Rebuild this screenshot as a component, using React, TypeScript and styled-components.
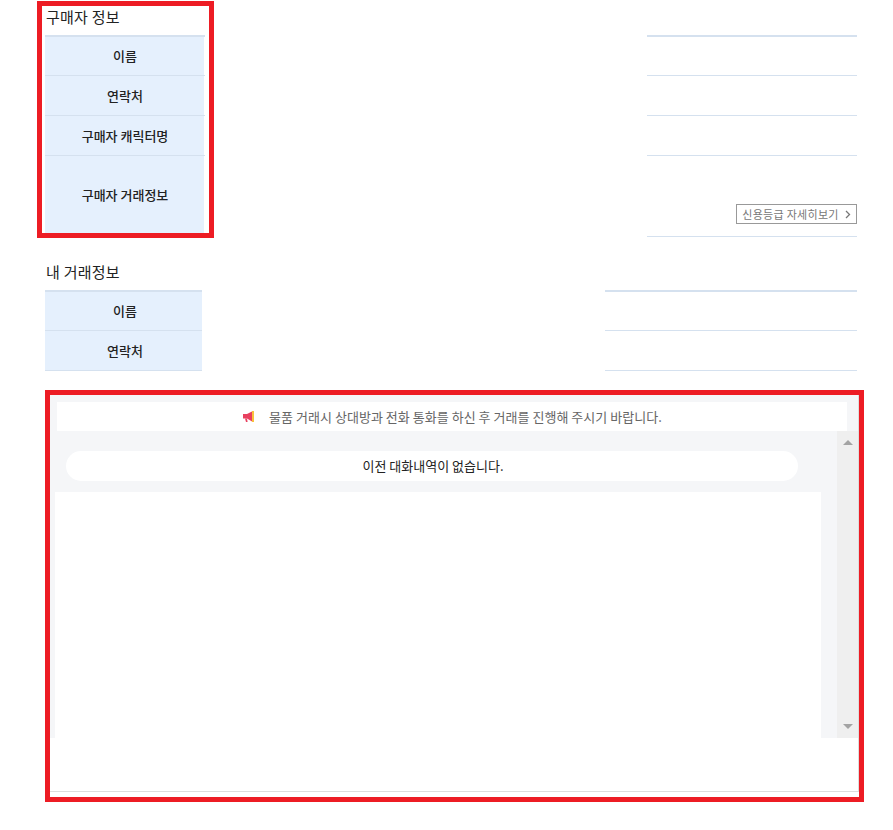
import React from 'react';
import styled, { createGlobalStyle } from 'styled-components';

const GlobalStyle = createGlobalStyle`
  html, body {
    margin: 0;
    padding: 0;
    background: #fff;
  }
  body {
    font-family: "Noto Sans CJK KR", "Noto Sans", sans-serif;
    color: #222;
  }
`;

const Page = styled.div`
  position: relative;
  width: 893px;
  height: 830px;
  padding: 8px 36px 0 45px;
  box-sizing: border-box;
  overflow: hidden;
`;

const Section = styled.section`
  margin-bottom: 24px;

  & + & {
    padding-top: 2px;
  }
`;

const Title = styled.h3`
  margin: 0;
  height: 27px;
  padding-left: 1px;
  font-size: 15px;
  line-height: 18px;
  font-weight: 400;
  letter-spacing: 0.25px;
  color: #222;
`;

interface InfoTableProps {
  $labelWidth: number;
  $valueWidth: number;
}

const InfoTable = styled.div<InfoTableProps>`
  display: grid;
  grid-template-columns: ${p => p.$labelWidth}px 1fr ${p => p.$valueWidth}px;
`;

const HeadLine = styled.div`
  position: relative;
  z-index: 1;
  height: 2px;
  margin-bottom: -1px;
  background: #d5e1ef;
`;

interface RowProps {
  $tall?: boolean;
}

interface LabelProps extends RowProps {
  $narrow?: boolean;
}

const Label = styled.div<LabelProps>`
  height: ${p => (p.$tall ? 76 : 39)}px;
  padding-bottom: ${p => (p.$tall ? 4 : 0)}px;
  padding-left: ${p => (p.$narrow ? 3 : 0)}px;
  border-bottom: 1px solid #d5e1ef;
  background: #e5f0fd;
  box-shadow: ${p => (p.$narrow ? 'none' : 'inset -1px 0 #fff')};
  display: flex;
  align-items: center;
  justify-content: center;
  font-size: 13px;
  font-weight: 500;
  color: #222;
`;

const Value = styled.div<RowProps>`
  height: ${p => (p.$tall ? 80 : 39)}px;
  border-bottom: 1px solid #d5e1ef;
  box-sizing: content-box;
  display: flex;
  align-items: flex-end;
  justify-content: flex-end;
`;

const CreditButton = styled.button`
  height: 20px;
  width: 121px;
  margin-bottom: 12px;
  padding: 0;
  border: 1px solid #999;
  background: #fff;
  display: flex;
  align-items: center;
  justify-content: center;
  gap: 6px;
  font-family: inherit;
  font-size: 11px;
  letter-spacing: 0.3px;
  color: #777;
`;

const Chat = styled.div`
  width: 808px;
  height: 396px;
  margin-left: 5px;
  display: flex;
  flex-direction: column;
  border-right: 1px solid #ddd;
  border-bottom: 1px solid #ddd;
`;

const Notice = styled.div`
  background: #f5f6f8;
  padding: 7px 11px 0 7px;
`;

const NoticeInner = styled.div`
  height: 29px;
  background: #fff;
  display: flex;
  align-items: center;
  justify-content: center;
  gap: 14px;
  font-size: 13px;
  letter-spacing: 0.03px;
  color: #666;
`;

const Board = styled.div`
  display: flex;
  height: 307px;
`;

const Messages = styled.div`
  flex: 1;
  display: flex;
  flex-direction: column;
  background: #f5f6f8;
  padding-right: 16px;
`;

const Empty = styled.div`
  padding: 20px 39px 11px 16px;
  margin-right: -16px;
`;

const Pill = styled.div`
  height: 30px;
  padding: 0 0 2px 2px;
  box-sizing: border-box;
  border-radius: 15px;
  background: #fff;
  display: flex;
  align-items: center;
  justify-content: center;
  font-size: 13px;
  color: #222;
`;

const Log = styled.div`
  flex: 1;
  background: #fff;
  margin-left: 5px;
`;

const ScrollBar = styled.div`
  width: 21px;
  background: #efefef;
  display: flex;
  flex-direction: column;
  justify-content: space-between;
  align-items: center;
  padding: 9px 0;
  box-sizing: border-box;
`;

interface ArrowProps {
  $down?: boolean;
}

const Arrow = styled.i<ArrowProps>`
  width: 0;
  height: 0;
  border-left: 5px solid transparent;
  border-right: 5px solid transparent;
  ${p =>
    p.$down
      ? 'border-top: 5px solid #a3a3a3;'
      : 'border-bottom: 5px solid #a3a3a3;'}
`;

interface HighlightProps {
  $left: number;
  $top: number;
  $width: number;
  $height: number;
}

const Highlight = styled.div<HighlightProps>`
  position: absolute;
  z-index: 2;
  left: ${p => p.$left}px;
  top: ${p => p.$top}px;
  width: ${p => p.$width}px;
  height: ${p => p.$height}px;
  border: 5px solid #ed1c24;
  box-sizing: border-box;
  pointer-events: none;
`;

function Megaphone() {
  return (
    <svg width="13" height="13" viewBox="0 0 13 13">
      <path d="M1 4h4v4.5H1z" fill="#e8405f" />
      <path d="M5 4 10 1.5v10L5 8.5z" fill="#e8405f" />
      <path d="M3 8.5h2l.6 3.5H4z" fill="#e8405f" />
      <rect x="10" y="1" width="2" height="11" fill="#f9c23c" />
    </svg>
  );
}

function Chevron() {
  return (
    <svg width="6" height="9" viewBox="0 0 6 9">
      <path d="M1 1l3.5 3.5L1 8" fill="none" stroke="#777" strokeWidth="1.3" />
    </svg>
  );
}

export default function App() {
  return (
    <Page>
      <GlobalStyle />
      <Section>
        <Title>구매자 정보</Title>
        <InfoTable $labelWidth={160} $valueWidth={210}>
          <HeadLine />
          <span />
          <HeadLine />
          <Label>이름</Label>
          <span />
          <Value />
          <Label>연락처</Label>
          <span />
          <Value />
          <Label>구매자 캐릭터명</Label>
          <span />
          <Value />
          <Label $tall>구매자 거래정보</Label>
          <span />
          <Value $tall>
            <CreditButton>
              신용등급 자세히보기
              <Chevron />
            </CreditButton>
          </Value>
        </InfoTable>
      </Section>

      <Section>
        <Title>내 거래정보</Title>
        <InfoTable $labelWidth={157} $valueWidth={252}>
          <HeadLine />
          <span />
          <HeadLine />
          <Label $narrow>이름</Label>
          <span />
          <Value />
          <Label $narrow>연락처</Label>
          <span />
          <Value />
        </InfoTable>
      </Section>

      <Chat>
        <Notice>
          <NoticeInner>
            <Megaphone />
            물품 거래시 상대방과 전화 통화를 하신 후 거래를 진행해 주시기 바랍니다.
          </NoticeInner>
        </Notice>
        <Board>
          <Messages>
            <Empty>
              <Pill>이전 대화내역이 없습니다.</Pill>
            </Empty>
            <Log />
          </Messages>
          <ScrollBar>
            <Arrow />
            <Arrow $down />
          </ScrollBar>
        </Board>
      </Chat>

      <Highlight $left={37} $top={1} $width={177} $height={237} />
      <Highlight $left={45} $top={390} $width={819} $height={412} />
    </Page>
  );
}
